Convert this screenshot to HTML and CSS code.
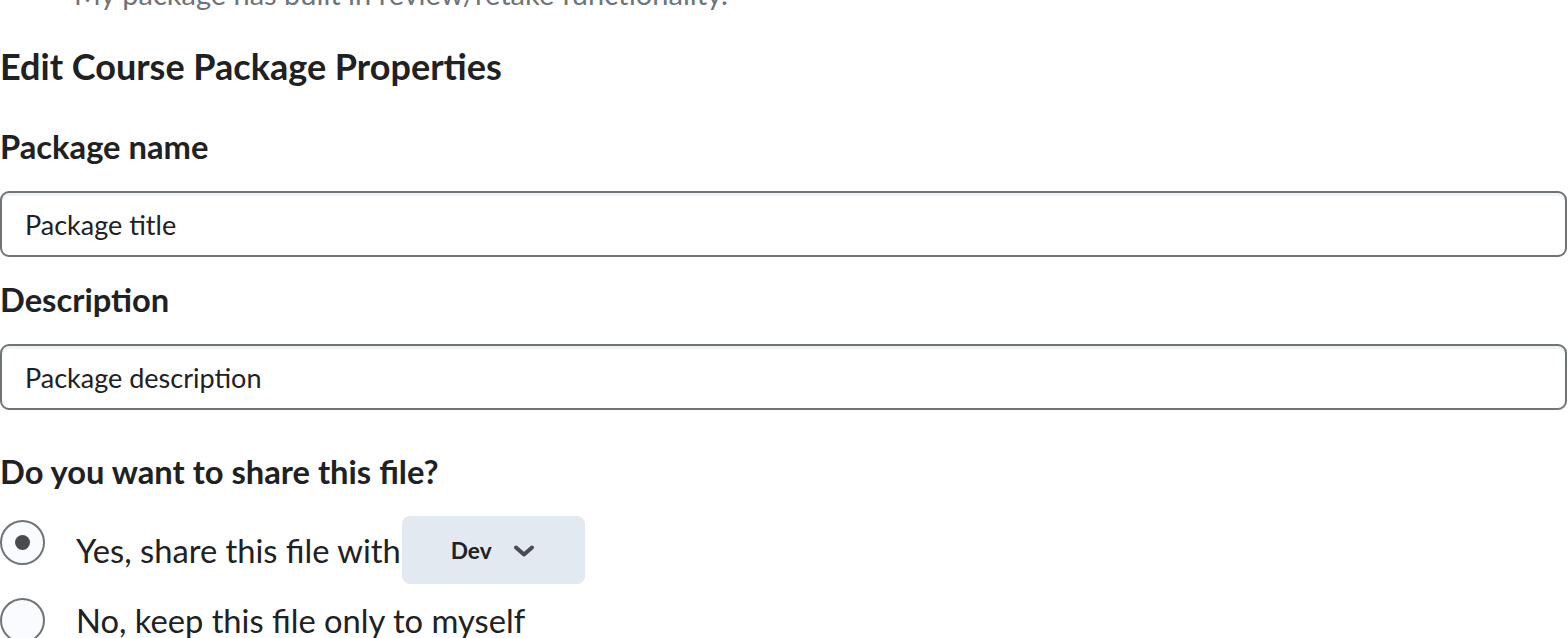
FILE: index.html
```html
<!DOCTYPE html>
<html lang="en">
<head>
<meta charset="utf-8">
<title>Edit Course Package Properties</title>
<link rel="stylesheet" href="styles.css">
</head>
<body>
<main class="page">
  <p class="note">My package has built in review/retake functionality.</p>
  <h2 class="title">Edit Course Package Properties</h2>
  <div class="field">
    <div class="label">Package name</div>
    <div class="input">Package title</div>
  </div>
  <div class="field field-desc">
    <div class="label">Description</div>
    <div class="input">Package description</div>
  </div>
  <section class="share">
    <div class="label legend">Do you want to share this file?</div>
    <div class="radio-row row-yes">
      <span class="radio checked"></span>
      <div class="radio-text">
        <span>Yes, share this file with</span>
        <span class="dropdown">Dev
          <svg class="chev" width="22" height="14" viewBox="0 0 22 14"><path d="M3 3.5 L11 10.5 L19 3.5" fill="none" stroke="#494c4e" stroke-width="4" stroke-linecap="round" stroke-linejoin="round"/></svg>
        </span>
      </div>
    </div>
    <div class="radio-row row-no">
      <span class="radio"></span>
      <div class="radio-text">No, keep this file only to myself</div>
    </div>
  </section>
</main>
</body>
</html>
```

FILE: styles.css
```css
html, body {
  margin: 0;
  padding: 0;
  background: #ffffff;
  overflow: hidden;
}

.page {
  font-family: Lato, "Noto Sans", sans-serif;
  color: #202122;
  width: 1568px;
  height: 638px;
  overflow: hidden;
}

.note {
  margin: -26px 0 0 0;
  padding-left: 74px;
  font-size: 29px;
  line-height: 40px;
  color: #6e7477;
}

.title {
  margin: 30px 0 0 0;
  font-size: 36px;
  line-height: 44px;
  font-weight: 700;
}

.field {
  margin-top: 39px;
}

.field-desc {
  margin-top: 23px;
}

.label {
  font-size: 32.7px;
  line-height: 40px;
  font-weight: 700;
}

.input {
  box-sizing: border-box;
  margin-top: 24px;
  width: 1567px;
  height: 66px;
  border: 2px solid #6e7477;
  border-radius: 9px;
  box-shadow: inset 0 3px 0 0 rgba(181, 189, 194, 0.2);
  padding: 0 23px;
  display: flex;
  align-items: center;
  font-size: 27px;
  color: #202122;
}

.share {
  margin-top: 42px;
}

.legend {
  margin-bottom: 24px;
}

.radio-row {
  display: flex;
  gap: 31px;
  font-size: 32.7px;
  color: #202122;
}

.row-yes {
  align-items: flex-start;
}

.row-yes .radio {
  margin-top: 4px;
}

.row-no {
  align-items: center;
  margin-top: 14px;
}

.radio {
  box-sizing: border-box;
  flex: none;
  width: 45px;
  height: 45px;
  border: 2px solid #6e7477;
  border-radius: 50%;
  background: #f9fbff;
  display: flex;
  align-items: center;
  justify-content: center;
}

.radio.checked::after {
  content: "";
  width: 15px;
  height: 15px;
  border-radius: 50%;
  background: #494c4e;
}

.radio-text {
  display: flex;
  align-items: center;
  line-height: 45px;
}

.dropdown {
  box-sizing: border-box;
  margin-left: 1px;
  width: 183px;
  height: 68px;
  border-radius: 8px;
  background: #e3e9f1;
  display: flex;
  align-items: center;
  padding-left: 49px;
  gap: 21px;
  font-size: 22.7px;
  font-weight: 700;
  color: #202122;
}

.chev {
  display: block;
  margin-top: 2px;
}
```
